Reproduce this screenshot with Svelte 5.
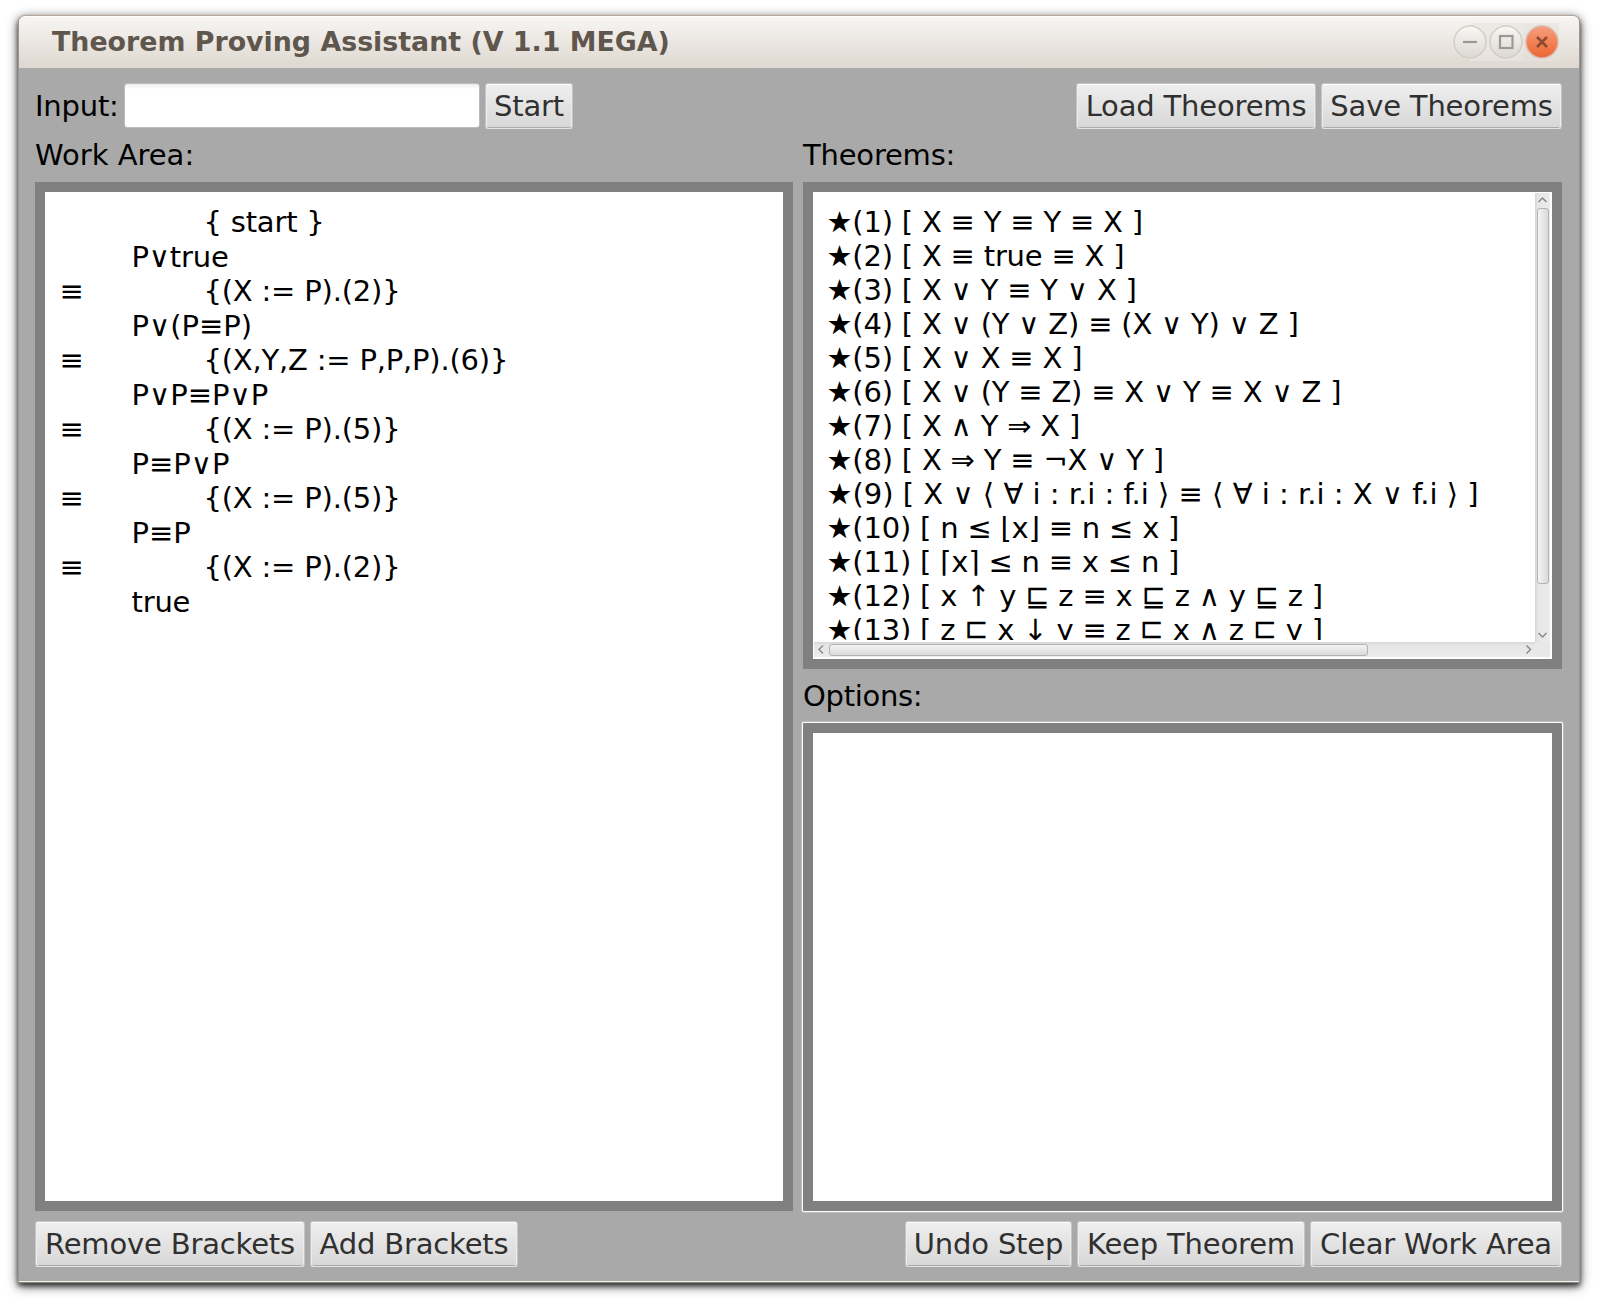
<script>
  // Formula rows sit on one tab stop, justifications on two.
  const steps = [
    '\t\t{ start }',
    '\tP∨true',
    '≡\t\t{(X := P).(2)}',
    '\tP∨(P≡P)',
    '≡\t\t{(X,Y,Z := P,P,P).(6)}',
    '\tP∨P≡P∨P',
    '≡\t\t{(X := P).(5)}',
    '\tP≡P∨P',
    '≡\t\t{(X := P).(5)}',
    '\tP≡P',
    '≡\t\t{(X := P).(2)}',
    '\ttrue'
  ];
  const theorems = [
    'X ≡ Y ≡ Y ≡ X',
    'X ≡ true ≡ X',
    'X ∨ Y ≡ Y ∨ X',
    'X ∨ (Y ∨ Z) ≡ (X ∨ Y) ∨ Z',
    'X ∨ X ≡ X',
    'X ∨ (Y ≡ Z) ≡ X ∨ Y ≡ X ∨ Z',
    'X ∧ Y ⇒ X',
    'X ⇒ Y ≡ ¬X ∨ Y',
    'X ∨ ⟨ ∀ i : r.i : f.i ⟩ ≡ ⟨ ∀ i : r.i : X ∨ f.i ⟩',
    'n ≤ ⌊x⌋ ≡ n ≤ x',
    '⌈x⌉ ≤ n ≡ x ≤ n',
    'x ↑ y ⊑ z ≡ x ⊑ z ∧ y ⊑ z',
    'z ⊑ x ↓ y ≡ z ⊑ x ∧ z ⊑ y'
  ];
</script>

<div class="window">
  <header>
    <h1>Theorem Proving Assistant (V 1.1 MEGA)</h1>
    <div class="controls">
      <svg width="108" height="38" viewBox="0 0 108 38" aria-hidden="true">
        <defs>
          <linearGradient id="pale" x2="0" y2="1"><stop offset="0" stop-color="#f8f7f5" /><stop offset="1" stop-color="#dcd8d3" /></linearGradient>
          <linearGradient id="warm" x2="0" y2="1"><stop offset="0" stop-color="#f3a080" /><stop offset=".45" stop-color="#f48558" /><stop offset="1" stop-color="#e96535" /></linearGradient>
        </defs>
        <rect x="18" y="0" width="53" height="38" fill="#e9e5e1" opacity=".7" />
        <rect x="71" y="0" width="36" height="38" fill="#e5e1dc" opacity=".6" />
        <circle cx="18" cy="19" r="16" fill="url(#pale)" stroke="#d5cdc4" stroke-width="1.5" />
        <circle cx="54" cy="19" r="16" fill="url(#pale)" stroke="#d5cdc4" stroke-width="1.5" />
        <circle cx="90" cy="19" r="16" fill="url(#warm)" stroke="#dbb8a8" stroke-width="1.5" />
        <path d="M11 19h14" stroke="#9d9892" stroke-width="2.2" />
        <rect x="48" y="13" width="12.5" height="12" fill="none" stroke="#9d9892" stroke-width="2.2" />
        <path d="M85 14l10 10M95 14l-10 10" stroke="#8f4c33" stroke-width="2.8" />
      </svg>
    </div>
  </header>

  <main>
    <div class="bar top">
      <label for="formula">Input:</label>
      <input id="formula" type="text" />
      <button>Start</button>
      <span class="grow"></span>
      <button class="load">Load Theorems</button>
      <button class="save">Save Theorems</button>
    </div>

    <div class="areas">
      <section>
        <h2 class="first">Work Area:</h2>
        <div class="panel work">
          {#each steps as step}<div class="step" class:formula={step.startsWith('\tP') && !step.includes('true')}>{step}</div>{/each}
        </div>
      </section>
      <section>
        <h2>Theorems:</h2>
        <div class="panel theorems">
          <div class="list">
            {#each theorems as body, i}<div class="theorem" class:quantified={body.includes('∀')}>★({i + 1}) [ {body} ]</div>{/each}
          </div>
          <div class="vscroll">
            <svg width="15" height="15" viewBox="0 0 15 15"><path d="M3.5 9l4-4 4 4" /></svg>
            <div class="vthumb"></div>
            <span class="grow"></span>
            <svg width="15" height="15" viewBox="0 0 15 15"><path d="M3.5 6l4 4 4-4" /></svg>
          </div>
          <div class="hscroll">
            <svg width="15" height="15" viewBox="0 0 15 15"><path d="M9 3.5l-4 4 4 4" /></svg>
            <div class="hthumb"></div>
            <span class="grow"></span>
            <svg width="15" height="15" viewBox="0 0 15 15"><path d="M6.5 3.5l4 4-4 4" /></svg>
          </div>
          <div class="corner"></div>
        </div>
        <h2 class="second">Options:</h2>
        <div class="panel options"></div>
      </section>
    </div>

    <div class="bar bottom">
      <button class="remove">Remove Brackets</button>
      <button class="add">Add Brackets</button>
      <span class="grow"></span>
      <button class="undo">Undo Step</button>
      <button class="keep">Keep Theorem</button>
      <button class="clear">Clear Work Area</button>
    </div>
  </main>
</div>

<style>
  :global(body) {
    background: #fff;
    overflow: hidden;
  }
  :global(#app) {
    height: 1301px;
    box-sizing: border-box;
    padding: 15px 19px 18px 18px;
  }
  .window {
    box-sizing: border-box;
    width: 1562px;
    height: 1268px;
    display: flex;
    flex-direction: column;
    border: 1px solid #a2958b;
    border-top-color: #b5a699;
    border-bottom: 1px solid #8b8580;
    border-radius: 7px 7px 0 0;
    background: #a9a9a9;
    box-shadow: 0 3px 12px rgba(0, 0, 0, 0.65), 0 3px 5px rgba(0, 0, 0, 0.6);
    font-family: 'DejaVu Sans', sans-serif;
    font-size: 29px;
    letter-spacing: -0.2px;
    color: #000;
  }
  header {
    box-sizing: border-box;
    flex: none;
    height: 52px;
    display: flex;
    align-items: center;
    justify-content: space-between;
    padding: 0 19px 2px 33px;
    border-top: 1px solid #fff;
    border-radius: 6px 6px 0 0;
    background: linear-gradient(#f7f6f4, #dfd7d0);
  }
  h1 {
    margin: 0;
    font-size: 26.83px;
    line-height: 34px;
    letter-spacing: 0;
    color: #5f574e;
    white-space: nowrap;
  }
  .controls {
    display: flex;
  }
  main {
    flex: 1;
    display: flex;
    flex-direction: column;
    padding: 15px 17px 13px 16px;
    border-bottom: 1px solid #f3f0ec;
  }
  .bar {
    display: flex;
    height: 46px;
    gap: 5px;
  }
  .grow {
    flex: 1;
  }
  label {
    width: 84px;
    line-height: 46px;
    white-space: nowrap;
  }
  input {
    box-sizing: border-box;
    width: 356px;
    height: 45px;
    border: 1px solid #bcbcbc;
    border-radius: 3px;
    background: linear-gradient(#ececec, #fff 5px);
    font: inherit;
  }
  button {
    box-sizing: border-box;
    flex: none;
    width: 88px;
    height: 46px;
    padding: 0;
    border: 1px solid #c4c4c4;
    border-bottom-color: #e3e3e3;
    border-radius: 3px;
    background: linear-gradient(#efefef, #d7d7d7);
    box-shadow: inset 0 1px #fff, inset 1px 0 #ededed, inset -1px 0 #ededed, inset 0 -1px #aaa;
    font: inherit;
    letter-spacing: -0.17px;
    line-height: 42px;
    color: #303030;
    white-space: nowrap;
  }
  .load {
    width: 240px;
  }
  .save {
    width: 241px;
  }
  .remove {
    width: 270px;
  }
  .add {
    width: 208px;
  }
  .undo {
    width: 167px;
  }
  .keep {
    width: 228px;
  }
  .clear {
    width: 252px;
  }
  .areas {
    flex: none;
    height: 1082px;
    display: grid;
    grid-template-columns: 758px 759px;
    gap: 10px;
    margin-bottom: 10px;
  }
  section {
    display: flex;
    flex-direction: column;
    min-width: 0;
  }
  h2 {
    margin: 0;
    height: 53px;
    font-size: inherit;
    font-weight: 400;
    line-height: 52px;
  }
  h2.first {
    letter-spacing: 0;
  }
  h2.second {
    height: 54px;
    line-height: 55px;
    letter-spacing: -0.3px;
  }
  .panel {
    box-sizing: border-box;
    border: 10px solid #808080;
    background: #fff;
  }
  .work {
    flex: 1;
    padding: 13px 12px 13px 14.5px;
  }
  .step {
    height: 34.5px;
    line-height: 34.5px;
    white-space: pre;
    tab-size: 72px;
  }
  .step.formula {
    letter-spacing: 0;
  }
  .theorems {
    height: 487px;
    display: grid;
    grid-template: 449px 15px / 721px 15px;
    padding: 1px 2px 2px 1px;
  }
  .list {
    box-sizing: border-box;
    height: 447px;
    padding: 12px 12.5px 0;
    overflow: hidden;
  }
  .theorem {
    height: 34px;
    line-height: 34px;
    white-space: pre;
  }
  .theorem.quantified {
    letter-spacing: 0;
  }
  .vscroll,
  .hscroll {
    display: flex;
    background: linear-gradient(90deg, #d6d6d6, #e6e6e6 3px, #ececec);
  }
  .vscroll {
    flex-direction: column;
  }
  .hscroll {
    background: linear-gradient(#d6d6d6, #e6e6e6 3px, #ececec);
  }
  .hscroll svg,
  .vscroll svg {
    flex: none;
  }
  .hscroll path,
  .vscroll path {
    fill: none;
    stroke: #8b8b8b;
    stroke-width: 1.5;
  }
  .vthumb,
  .hthumb {
    box-sizing: border-box;
    border: 1px solid #b2b2b2;
    border-radius: 3px;
  }
  .vthumb {
    width: 12px;
    height: 376px;
    margin-left: 2px;
    background: linear-gradient(90deg, #f4f4f4, #d9d9d9);
  }
  .hthumb {
    width: 539px;
    height: 12px;
    margin-top: 2px;
    background: linear-gradient(#f4f4f4, #d9d9d9);
  }
  .corner {
    background: #e8e8e8;
  }
  .options {
    flex: 1;
    border-radius: 1px;
    box-shadow: 0 0 0 1px #fff, 0 0 0 2px #bdbdbd;
  }
</style>
